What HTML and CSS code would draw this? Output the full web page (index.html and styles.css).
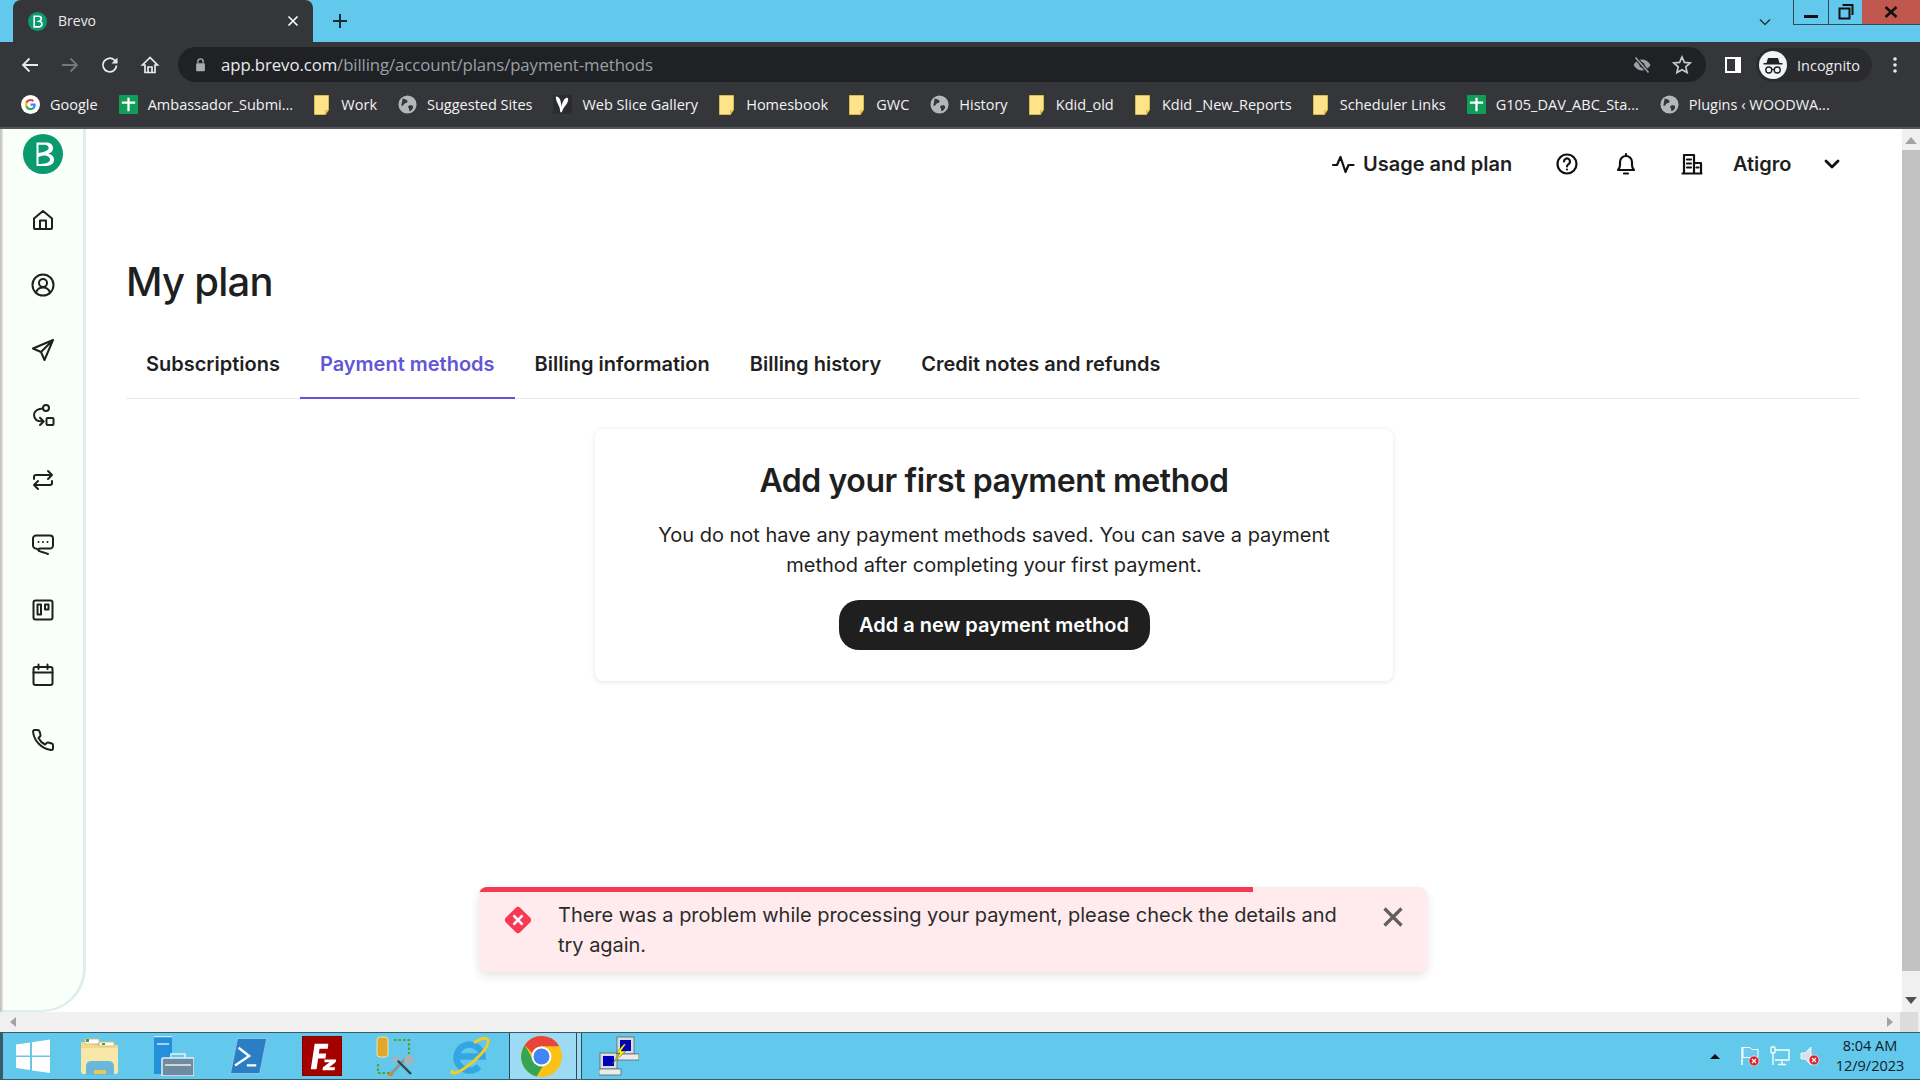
FILE: index.html
```html
<!DOCTYPE html>
<html lang="en">
<head>
<meta charset="utf-8">
<title>Brevo</title>
<link rel="stylesheet" href="styles.css">
</head>
<body>
<div class="titlebar">
  <div class="tab">
    <svg class="fav" viewBox="0 0 20 20"><circle cx="10" cy="10" r="10" fill="#0b996e"/><path d="M6.5 4.5h4.5c2 0 3 1 3 2.5 0 1.300-.8 2.200-2.200 2.700 1.800.3 2.900 1.400 2.900 3 0 2-1.700 3-4 3H6.500z" fill="none" stroke="#fff" stroke-width="1.700"/></svg>
    <span class="tab-title">Brevo</span>
    <svg class="tab-x" viewBox="0 0 12 12"><path d="M1.500 1.500l9 9M10.500 1.500l-9 9" stroke="#fff" stroke-width="1.600"/></svg>
  </div>
  <svg class="plus" viewBox="0 0 16 16"><path d="M8 1v14M1 8h14" stroke="#1b2a33" stroke-width="2"/></svg>
  <svg class="tab-list" viewBox="0 0 12 8"><path d="M1 1.500l5 5 5-5" fill="none" stroke="#24363f" stroke-width="1.500"/></svg>
  <div class="winbtns">
    <div class="winbtn min"><svg viewBox="0 0 16 16" width="16" height="16"><rect x="1" y="11" width="14" height="3" fill="#111"/></svg></div>
    <div class="winbtn max"><svg viewBox="0 0 16 16" width="16" height="16"><path d="M4.500 1h10v10M1.500 4.500h10v10h-10z" fill="none" stroke="#111" stroke-width="2"/></svg></div>
    <div class="winbtn close"><svg viewBox="0 0 14 12" width="14" height="12"><path d="M1.500 1l11 10M12.500 1l-11 10" stroke="#111" stroke-width="2.600"/></svg></div>
  </div>
</div>

<div class="toolbar">
  <div class="navs">
    <svg class="nav" viewBox="0 0 20 20"><path d="M18 10H3M9.500 3.500L3 10l6.500 6.500" fill="none" stroke="#e8eaed" stroke-width="1.800"/></svg>
    <svg class="nav" viewBox="0 0 20 20"><path d="M2 10h15M10.500 3.500L17 10l-6.500 6.500" fill="none" stroke="#74777b" stroke-width="1.800"/></svg>
    <svg class="nav" viewBox="0 0 20 20"><path d="M16.500 10.500a6.800 6.800 0 1 1-2-5.300L17 7.500" fill="none" stroke="#e8eaed" stroke-width="1.800"/><path d="M17.500 2.500v6h-6z" fill="#e8eaed"/></svg>
    <svg class="nav" viewBox="0 0 20 20"><path d="M10 2.500L2.500 10H5v7.500h10V10h2.500zM8 17.500V12h4v5.500" fill="none" stroke="#e8eaed" stroke-width="1.700"/></svg>
  </div>
  <div class="omnibox">
    <svg class="lock" viewBox="0 0 12 16"><rect x="1" y="6" width="10" height="9" rx="1" fill="#a8abaf"/><path d="M3 6V4a3 3 0 0 1 6 0v2" fill="none" stroke="#a8abaf" stroke-width="1.500"/></svg>
    <span class="url"><span class="url-host">app.brevo.com</span>/billing/account/plans/payment-methods</span>
    <svg class="eye" viewBox="0 0 20 20"><path d="M1.500 10S4.500 4.500 10 4.500 18.500 10 18.500 10 15.500 15.500 10 15.500 1.500 10 1.500 10z" fill="#9aa0a6"/><circle cx="10" cy="10" r="2.500" fill="#202124"/><path d="M3.500 2.500l13 15" stroke="#202124" stroke-width="3.500"/><path d="M3.500 2.500l13 15" stroke="#9aa0a6" stroke-width="1.600"/></svg>
    <svg class="star" viewBox="0 0 20 20"><path d="M10 2l2.400 5.400 5.800.6-4.400 3.900 1.300 5.700L10 14.700l-5.100 2.900 1.300-5.700L1.800 8l5.800-.6z" fill="none" stroke="#c5c7ca" stroke-width="1.700"/></svg>
  </div>
  <svg class="panel" viewBox="0 0 18 18"><rect x="1" y="1" width="16" height="16" fill="#fff"/><rect x="3" y="3" width="8" height="12" fill="#35363a"/></svg>
  <div class="incognito">
    <svg class="incog-av" viewBox="0 0 28 28"><circle cx="14" cy="14" r="14" fill="#f1f3f4"/><path d="M9 7h10l1.500 5h3v1.500h-19V12h3z" fill="#202124"/><circle cx="9.800" cy="19" r="3" fill="none" stroke="#202124" stroke-width="1.400"/><circle cx="18.200" cy="19" r="3" fill="none" stroke="#202124" stroke-width="1.400"/><path d="M12.500 18.500h3" stroke="#202124" stroke-width="1.200"/></svg>
    <span class="incog-label">Incognito</span>
  </div>
  <svg class="dots" viewBox="0 0 4 18"><circle cx="2" cy="3" r="1.800" fill="#e8eaed"/><circle cx="2" cy="9" r="1.800" fill="#e8eaed"/><circle cx="2" cy="15" r="1.800" fill="#e8eaed"/></svg>
</div>

<div class="bookmarks">
  <div class="bm">
    <svg class="bm-ic" viewBox="0 0 20 20"><circle cx="10" cy="10" r="10" fill="#fff"/><path d="M15.500 10.200c0-.5 0-.9-.1-1.300H10v2.400h3.100a2.700 2.700 0 0 1-1.200 1.800v1.500h1.900c1.100-1 1.700-2.500 1.700-4.400z" fill="#4285f4"/><path d="M10 16c1.600 0 3-.5 3.800-1.400l-1.900-1.500c-.5.400-1.200.6-1.900.6-1.500 0-2.800-1-3.200-2.400H4.800v1.500A6 6 0 0 0 10 16z" fill="#34a853"/><path d="M6.800 11.300a3.600 3.600 0 0 1 0-2.600V7.200h-2a6 6 0 0 0 0 5.600z" fill="#fbbc05"/><path d="M10 6.400c.8 0 1.600.3 2.200.9l1.600-1.700A6 6 0 0 0 4.800 7.200l2 1.500C7.200 7.400 8.500 6.400 10 6.400z" fill="#ea4335"/></svg>
    <span>Google</span>
  </div>
  <div class="bm">
    <svg class="bm-ic" viewBox="0 0 20 20"><rect width="20" height="20" rx="1" fill="#0f9d58"/><path d="M10 3v14M3 8h14" stroke="#fff" stroke-width="2.400"/></svg>
    <span>Ambassador_Submi...</span>
  </div>
  <div class="bm bm-folder">
    <svg class="bm-ic folder" viewBox="0 0 16 20"><path d="M.5.5h14v14l-3 5H.5z" fill="#fee388" stroke="#d9b84c"/><path d="M11.500 19.500v-4h3" fill="none" stroke="#d9b84c"/></svg>
    <span>Work</span>
  </div>
  <div class="bm">
    <svg class="bm-ic" viewBox="0 0 20 20"><circle cx="10" cy="10" r="9.500" fill="#b4b7ba"/><path d="M5 3.500c2 1.500 5 1 5 3.500 0 1.500-2.500 1-3.500 2.500S5 12 3.500 11M12 11c2-.5 4 0 4 1.500s-2 4-3.500 4.500c-1 .2-.5-3-1.500-3.500-1-.7 0-2.300 1-2.500z" fill="#35363a"/></svg>
    <span>Suggested Sites</span>
  </div>
  <div class="bm">
    <svg class="bm-ic" viewBox="0 0 20 20"><rect width="20" height="20" fill="#2b2c2f"/><path d="M3 1.500c2.500 0 4.500 2 5 5 .3 2 .8 4 1 6 .3-3 2-8 5-9.500 2-.8 2.500 1.500 1.500 4-1 3-3.500 5-5 8-.5 1.500-1 3-2 3.500-1.500-.3-1-3-1.500-5C6 10 2.500 6 3 1.500z" fill="#fff"/></svg>
    <span>Web Slice Gallery</span>
  </div>
  <div class="bm bm-folder">
    <svg class="bm-ic folder" viewBox="0 0 16 20"><path d="M.5.5h14v14l-3 5H.5z" fill="#fee388" stroke="#d9b84c"/><path d="M11.500 19.500v-4h3" fill="none" stroke="#d9b84c"/></svg>
    <span>Homesbook</span>
  </div>
  <div class="bm bm-folder">
    <svg class="bm-ic folder" viewBox="0 0 16 20"><path d="M.5.5h14v14l-3 5H.5z" fill="#fee388" stroke="#d9b84c"/><path d="M11.500 19.500v-4h3" fill="none" stroke="#d9b84c"/></svg>
    <span>GWC</span>
  </div>
  <div class="bm">
    <svg class="bm-ic" viewBox="0 0 20 20"><circle cx="10" cy="10" r="9.500" fill="#b4b7ba"/><path d="M5 3.500c2 1.500 5 1 5 3.500 0 1.500-2.500 1-3.500 2.500S5 12 3.500 11M12 11c2-.5 4 0 4 1.500s-2 4-3.500 4.500c-1 .2-.5-3-1.500-3.500-1-.7 0-2.300 1-2.500z" fill="#35363a"/></svg>
    <span>History</span>
  </div>
  <div class="bm bm-folder">
    <svg class="bm-ic folder" viewBox="0 0 16 20"><path d="M.5.5h14v14l-3 5H.5z" fill="#fee388" stroke="#d9b84c"/><path d="M11.500 19.500v-4h3" fill="none" stroke="#d9b84c"/></svg>
    <span>Kdid_old</span>
  </div>
  <div class="bm bm-folder">
    <svg class="bm-ic folder" viewBox="0 0 16 20"><path d="M.5.5h14v14l-3 5H.5z" fill="#fee388" stroke="#d9b84c"/><path d="M11.500 19.500v-4h3" fill="none" stroke="#d9b84c"/></svg>
    <span>Kdid _New_Reports</span>
  </div>
  <div class="bm bm-folder">
    <svg class="bm-ic folder" viewBox="0 0 16 20"><path d="M.5.5h14v14l-3 5H.5z" fill="#fee388" stroke="#d9b84c"/><path d="M11.500 19.500v-4h3" fill="none" stroke="#d9b84c"/></svg>
    <span>Scheduler Links</span>
  </div>
  <div class="bm">
    <svg class="bm-ic" viewBox="0 0 20 20"><rect width="20" height="20" rx="1" fill="#0f9d58"/><path d="M10 3v14M3 8h14" stroke="#fff" stroke-width="2.400"/></svg>
    <span>G105_DAV_ABC_Sta...</span>
  </div>
  <div class="bm">
    <svg class="bm-ic" viewBox="0 0 20 20"><circle cx="10" cy="10" r="9.500" fill="#b4b7ba"/><path d="M5 3.500c2 1.500 5 1 5 3.500 0 1.500-2.500 1-3.500 2.500S5 12 3.500 11M12 11c2-.5 4 0 4 1.500s-2 4-3.500 4.500c-1 .2-.5-3-1.500-3.500-1-.7 0-2.300 1-2.500z" fill="#35363a"/></svg>
    <span>Plugins ‹ WOODWA...</span>
  </div>
</div>

<div class="viewport">
  <div class="page-row">
    <div class="leftedge"></div>
    <aside class="sidebar">
      <svg class="logo" viewBox="0 0 40 40"><circle cx="20" cy="20" r="20" fill="#0b996e"/><path d="M13.500 8.500h10c4 0 6.500 2.300 6.500 5.700 0 2.800-1.800 4.700-5 5.600 3.800.6 6 2.800 6 6 0 4-3.300 6.200-8 6.200h-9.500z M15.500 19c3.200-.6 8.500-1 10.200-4.500 0-2.400-1.500-3.800-4-3.800h-6.200z M15.500 30c5-.2 11.500-.8 11.500-4.300 0-2.600-2.500-4.300-6-4.200-2 .1-4 .6-5.500 1.500z" fill="#fff" fill-rule="evenodd"/></svg>
      <svg class="side-ic" viewBox="0 0 24 24"><path d="M3 10.500L12 3l9 7.500V20a1 1 0 0 1-1 1H4a1 1 0 0 1-1-1zM9 21v-8.500h6V21"/></svg>
      <svg class="side-ic" viewBox="0 0 24 24"><circle cx="12" cy="12" r="10.500"/><circle cx="12" cy="10" r="4"/><path d="M5 19.500c1-3 4-5 7-5s6 2 7 5"/></svg>
      <svg class="side-ic" viewBox="0 0 24 24"><path d="M22 2L2 10.500l8 3.500 3.500 8zM22 2L10 14"/></svg>
      <svg class="side-ic" viewBox="0 0 24 24"><circle cx="15" cy="5" r="3"/><rect x="15.500" y="15" width="7" height="7" rx="1"/><path d="M12 5.500C7 5.500 3 8 3 12s3 6.500 9 6.500M9 14.800l3.700 3.700L9 22"/></svg>
      <svg class="side-ic" viewBox="0 0 24 24"><path d="M3 11V9a2 2 0 0 1 2-2h16M17 3l4 4-4 4M21 13v2a2 2 0 0 1-2 2H3M7 13l-4 4 4 4"/></svg>
      <svg class="side-ic" viewBox="0 0 24 24"><path d="M5 2.500h14a3 3 0 0 1 3 3v7a3 3 0 0 1-3 3H9c-1.500 0-2 1-1 2 1 1.500 4 1.500 9 3.500M5 15.500a3 3 0 0 1-3-3v-7a3 3 0 0 1 3-3M8 18c-1-1-2-2.500-3-2.500"/><path d="M7.500 9h.01M12 9h.01M16.500 9h.01"/></svg>
      <svg class="side-ic" viewBox="0 0 24 24"><rect x="2.500" y="2.500" width="19" height="19" rx="2"/><rect x="6.500" y="6.500" width="3.500" height="10"/><rect x="14" y="6.500" width="3.500" height="5"/></svg>
      <svg class="side-ic" viewBox="0 0 24 24"><rect x="2.500" y="4" width="19" height="18" rx="2"/><path d="M2.500 9.500h19M7.500 1.500V6M16.500 1.500V6"/></svg>
      <svg class="side-ic" viewBox="0 0 24 24"><path d="M6.500 2H3.500C2.500 2 2 3 2.100 4 3 13 11 21 20 22c1 .1 2-.5 2-1.500V17c0-.8-.5-1.300-1.200-1.500l-3.500-1c-.6-.2-1.200 0-1.600.4L14 16.500C11 15 9 13 7.500 10l1.600-1.700c.4-.4.600-1 .4-1.600l-1-3.500C8.300 2.500 7.400 2 6.500 2z"/></svg>
    </aside>
    <main class="main">
      <header class="topbar">
        <div class="usage">
          <svg class="top-ic activity" viewBox="0 0 24 24"><path d="M2 13h4l3.500-8 5 15 3-7h5"/></svg>
          <span>Usage and plan</span>
        </div>
        <svg class="top-ic help" viewBox="0 0 24 24"><circle cx="12" cy="12" r="9.500"/><path d="M9 9.500a3 3 0 1 1 4.500 2.600c-1 .6-1.500 1.200-1.500 2.400M12 17.500v.01"/></svg>
        <svg class="top-ic bell" viewBox="0 0 24 24"><path d="M4 18c1.500-1.500 2-3 2-5V10a6 6 0 0 1 12 0v3c0 2 .5 3.500 2 5zM10 21.500h4M12 2v2"/></svg>
        <svg class="top-ic org" viewBox="0 0 24 24"><path d="M4 21V3h10v18M14 11h7v10M2.500 21.500h19M7 7.500h4M7 11.500h4M7 15.500h4M16.500 15.500h2"/></svg>
        <span class="org-name">Atigro</span>
        <svg class="top-ic chev" viewBox="0 0 24 24"><path d="M6 9l6 6 6-6"/></svg>
      </header>
      <h1 class="page-title">My plan</h1>
      <nav class="tabs">
        <a class="tab-link">Subscriptions</a>
        <a class="tab-link active">Payment methods</a>
        <a class="tab-link">Billing information</a>
        <a class="tab-link">Billing history</a>
        <a class="tab-link">Credit notes and refunds</a>
      </nav>
      <section class="card">
        <h2 class="card-title">Add your first payment method</h2>
        <p class="card-text">You do not have any payment methods saved. You can save a payment method after completing your first payment.</p>
        <button class="primary">Add a new payment method</button>
      </section>
      <div class="toast">
        <div class="toast-bar"></div>
        <svg class="toast-ic" viewBox="0 0 30 30"><rect x="6" y="6" width="18" height="18" rx="3" transform="rotate(45 15 15)" fill="#f63a54"/><path d="M11 11l8 8M19 11l-8 8" stroke="#fff" stroke-width="2.200"/></svg>
        <p class="toast-text">There was a problem while processing your payment, please check the details and try again.</p>
        <svg class="toast-x" viewBox="0 0 20 20"><path d="M1.500 1.500l17 17M18.500 1.500l-17 17" stroke="#5f5f5f" stroke-width="3.200"/></svg>
      </div>
    </main>
    <div class="vscroll">
      <svg class="sb-arrow" viewBox="0 0 10 6"><path d="M5 0l5 6H0z" fill="#a3a3a3"/></svg>
      <div class="vthumb"></div>
      <svg class="sb-arrow" viewBox="0 0 10 6"><path d="M5 6L0 0h10z" fill="#505050"/></svg>
    </div>
  </div>
  <div class="hscroll">
    <svg class="hs-arrow" viewBox="0 0 6 10"><path d="M0 5l6-5v10z" fill="#a3a3a3"/></svg>
    <svg class="hs-arrow" viewBox="0 0 6 10"><path d="M6 5L0 0v10z" fill="#a3a3a3"/></svg>
    <div class="corner"></div>
  </div>
</div>

<footer class="taskbar">
  <svg class="tb-start" viewBox="0 0 34 34"><path d="M0 5.500l14-2v13H0zM16 3.200L34 .5V16.500H16zM0 18h14v13L0 29zM16 18h18v16l-18-2.500z" fill="#fff"/></svg>
  <svg class="tb-ic" viewBox="0 0 40 40"><path d="M1 6h12l3 3h22v26a3 3 0 0 1-3 3H4a3 3 0 0 1-3-3z" fill="#f3d987"/><path d="M5 3h14v5H5zM19 6h15v4H19z" fill="#fff" stroke="#d8c078"/><path d="M6 3h3v3H6zM22 7h3v2h-3z" fill="#3fa34d"/><path d="M1 12h37v23a3 3 0 0 1-3 3H4a3 3 0 0 1-3-3z" fill="#f7e7a9"/><path d="M6 39V30a5 5 0 0 1 5-5h18a5 5 0 0 1 5 5v9z" fill="#6bb7dc"/><path d="M14 34h12v4H14z" fill="#e6c95b"/></svg>
  <svg class="tb-ic" viewBox="0 0 40 40"><rect x="0" y="0" width="18" height="38" fill="#2490dc"/><path d="M0 .5h18M3 8h12" stroke="#cfe8f7" stroke-width="1.400"/><rect x="8" y="22" width="32" height="18" rx="1" fill="#6f8ba0" stroke="#e8f0f5" stroke-width="1.500"/><path d="M17 22v-4h14v4" fill="none" stroke="#e8f0f5" stroke-width="1.500"/><path d="M11 29h26" stroke="#e8f0f5" stroke-width="1.500"/></svg>
  <svg class="tb-ic" viewBox="0 0 34 34"><path d="M8 2h25l-6 30H2z" fill="#2a7fc4" stroke="#86c3e9"/><path d="M9 10l9 7-12 8M16 25h8" fill="none" stroke="#fff" stroke-width="2"/></svg>
  <svg class="tb-ic" viewBox="0 0 41 41"><rect width="41" height="41" fill="#a50000"/><path d="M0 0h41v41H0z" fill="none" stroke="#600" stroke-width="2" stroke-dasharray="2 2"/><path d="M9 34L13 8h14l-.6 5H18l-.8 5h7.500l-.6 5h-7.500l-1.700 11z" fill="#fff"/><path d="M23 24h12l-.6 3-6.500 5h6l-.5 3H21l.5-3 6.800-5H23z" fill="#fff"/></svg>
  <svg class="tb-ic" viewBox="0 0 40 40"><rect x="1" y="1" width="11" height="20" rx="3" fill="#e0a92e" stroke="#f3e3ab"/><path d="M18 4h15v14M2 28v9h12" fill="none" stroke="#55a02f" stroke-width="2.200" stroke-dasharray="2.500 2"/><path d="M16 37L30 22" stroke="#8a949b" stroke-width="3"/><path d="M16 37l-3 3" stroke="#c98a2c" stroke-width="4"/><path d="M19 22l16 16" stroke="#38434a" stroke-width="2.400"/><circle cx="33" cy="24" r="5" fill="#a7b3bb"/><path d="M15 24l6-4 3 3-5 4z" fill="#a7b3bb"/></svg>
  <svg class="tb-ic" viewBox="0 0 40 40"><path d="M7.500 20.500h25a13 13 0 1 0-3.500 10" fill="none" stroke="#35a6e4" stroke-width="6.500"/><path d="M3 34C-1 39 6 38 15 32 27 24 40 10 38 4c-1-3-8-2-14 3" fill="none" stroke="#f2cc28" stroke-width="2.800"/></svg>
  <div class="tb-active">
    <svg class="tb-chrome" viewBox="0 0 41 41"><circle cx="20.500" cy="20.500" r="20.500" fill="#fbc116"/><path d="M20.500 0a20.500 20.500 0 0 1 17.800 10.300H20.500a10 10 0 0 0-9.400 6.600L3.700 9A20.500 20.500 0 0 1 20.500 0z" fill="#e9443a"/><path d="M3.700 9l8 14a10 10 0 0 0 10 7l-6 10.500A20.500 20.500 0 0 1 3.700 9z" fill="#36a551"/><circle cx="20.500" cy="20.500" r="10" fill="#fff"/><circle cx="20.500" cy="20.500" r="8" fill="#4285f4"/></svg>
  </div>
  <div class="tb-sep"></div>
  <svg class="tb-ic tb-net" viewBox="0 0 40 40"><rect x="18" y="1" width="17" height="17" fill="#d8dde2" stroke="#555" stroke-width=".7"/><rect x="21" y="4" width="11" height="11" fill="#0000b8"/><rect x="16" y="18" width="24" height="6" fill="#e8ecef" stroke="#555" stroke-width=".7"/><rect x="1" y="17" width="17" height="16" fill="#d8dde2" stroke="#555" stroke-width=".7"/><rect x="4" y="20" width="11" height="10" fill="#0000b8"/><rect x="0" y="33" width="22" height="6" fill="#e8ecef" stroke="#555" stroke-width=".7"/><path d="M25 8l-8 9 4 0-8 11 14-13h-5l5-7z" fill="#f7ee1a" stroke="#333" stroke-width=".5"/></svg>
  <div class="tray">
    <svg class="tray-up" viewBox="0 0 10 5"><path d="M5 0l5 5H0z" fill="#111"/></svg>
    <svg class="tray-ic" viewBox="0 0 20 20"><path d="M2 1v18" stroke="#fff" stroke-width="1.400"/><path d="M3 1.500h7l2 2 6 0v8H3z" fill="#6cc9ea" stroke="#fff"/><circle cx="14" cy="15" r="5" fill="#d8232a" stroke="#fff" stroke-width=".6"/><path d="M12 13l4 4M16 13l-4 4" stroke="#fff" stroke-width="1.200"/></svg>
    <svg class="tray-ic" viewBox="0 0 20 20"><rect x="1" y="1" width="4" height="6" rx="1" fill="none" stroke="#fff" stroke-width="1.300"/><path d="M3 7v12M5 4h14v10H5M12 14v4M8 18.500h8" fill="none" stroke="#fff" stroke-width="1.300"/></svg>
    <svg class="tray-ic" viewBox="0 0 20 20"><path d="M1 7h4l6-6v18l-6-6H1z" fill="#d7e2e8" stroke="#fff" stroke-width=".8"/><circle cx="14" cy="14" r="5" fill="#d8232a" stroke="#fff" stroke-width=".6"/><path d="M12 12l4 4M16 12l-4 4" stroke="#fff" stroke-width="1.200"/></svg>
    <div class="clock"><span>8:04 AM</span><span>12/9/2023</span></div>
  </div>
</footer>
</body>
</html>
```
FILE: styles.css
```css
* { box-sizing: border-box; }
html, body { margin: 0; padding: 0; }
body {
  width: 1920px;
  height: 1080px;
  overflow: hidden;
  display: flex;
  flex-direction: column;
  font-family: Inter, "Liberation Sans", sans-serif;
  background: #fff;
}

/* Browser chrome */
.titlebar {
  height: 42px;
  flex: none;
  background: #62c8ec;
  display: flex;
  align-items: flex-start;
  padding-left: 13px;
  position: relative;
}
.tab {
  width: 300px;
  height: 42px;
  background: #35363a;
  border-radius: 8px 8px 0 0;
  display: flex;
  align-items: center;
  padding: 0 14px 0 15px;
  color: #e8eaed;
}
.fav { width: 19px; height: 19px; flex: none; }
.tab-title {
  margin-left: 11px;
  margin-top: -2px;
  font: 14px "Open Sans", sans-serif;
  flex: 1;
}
.tab-x { width: 12px; height: 12px; }
.plus { width: 16px; height: 16px; margin: 13px 0 0 19px; }
.tab-list { width: 12px; height: 8px; margin: 18px 0 0 1411px; }
.winbtns {
  position: absolute;
  top: 0;
  right: 0;
  display: flex;
  height: 25px;
  border-left: 1px solid #2c4a57;
  border-bottom: 1px solid #2c4a57;
}
.winbtn { display: flex; align-items: center; justify-content: center; height: 24px; }
.min { width: 35px; border-right: 1px solid #2c4a57; }
.max { width: 33px; }
.close { width: 58px; background: #c0584f; }

.toolbar {
  height: 40px;
  flex: none;
  background: #35363a;
  display: flex;
  align-items: flex-end;
  color: #e8eaed;
}
.navs {
  height: 35px;
  width: 178px;
  flex: none;
  display: flex;
  align-items: center;
  padding-left: 20px;
  gap: 20px;
}
.nav { width: 20px; height: 20px; flex: none; }
.omnibox {
  width: 1528px;
  height: 35px;
  flex: none;
  background: #202124;
  border-radius: 18px;
  display: flex;
  align-items: center;
  padding: 0 14px 0 17px;
}
.lock { width: 11px; height: 14px; flex: none; }
.url {
  margin-left: 15px;
  flex: 1;
  font: 16.800px "Open Sans", sans-serif;
  color: #9aa0a6;
  letter-spacing: -.1px;
}
.url-host { color: #e8eaed; }
.eye { width: 20px; height: 20px; }
.star { width: 20px; height: 20px; margin-left: 20px; }
.panel { width: 18px; height: 18px; margin: 0 0 8px 18px; flex: none; }
.incognito {
  width: 116px;
  height: 34px;
  margin-left: 14px;
  flex: none;
  background: #2a2b2e;
  border-radius: 17px;
  display: flex;
  align-items: center;
  padding-left: 3px;
}
.incog-av { width: 28px; height: 28px; flex: none; }
.incog-label { margin-left: 10px; font: 14.500px "Open Sans", sans-serif; }
.dots { width: 4px; height: 18px; margin: 0 0 8px 21px; flex: none; }

.bookmarks {
  height: 47px;
  flex: none;
  background: #35363a;
  border-bottom: 2px solid #54565a;
  display: flex;
  align-items: center;
  padding: 0 0 0 21px;
  gap: 21px;
  color: #f1f3f4;
  font: 14.500px "Open Sans", sans-serif;
}
.bm { display: flex; align-items: center; gap: 10px; white-space: nowrap; }
.bm-folder { gap: 11.200px; }
.bm-ic { width: 19px; height: 19px; flex: none; }
.bm-ic.folder { width: 16px; height: 20px; }

/* Page area */
.viewport { flex: 1; min-height: 0; display: flex; flex-direction: column; }
.page-row { flex: 1; min-height: 0; display: flex; }
.leftedge { width: 3px; flex: none; background: linear-gradient(90deg, #bdbdbd, #e6e6e6); }
.sidebar {
  width: 83px;
  flex: none;
  background: #f9fff9;
  border-right: 3px solid #dcefe8;
  border-bottom: 2px solid #dcefe8;
  border-radius: 0 0 44px 0;
  display: flex;
  flex-direction: column;
  align-items: center;
  padding-top: 5px;
  gap: 41px;
}
.logo { width: 40px; height: 40px; flex: none; margin: 0 0 -7px -1px; }
.side-ic {
  width: 24px;
  height: 24px;
  flex: none;
  fill: none;
  stroke: #1f1f1f;
  stroke-width: 2;
  stroke-linecap: round;
  stroke-linejoin: round;
  margin-left: -1px;
}

.main {
  flex: 1;
  min-width: 0;
  position: relative;
  padding: 0 42px 0 40px;
}
.topbar {
  height: 70px;
  display: flex;
  align-items: center;
  padding-left: 1205px;
  font-size: 20px;
  font-weight: 600;
  color: #1f1f1f;
}
.usage { display: flex; align-items: center; gap: 8px; width: 224px; }
.top-ic {
  width: 24px;
  height: 24px;
  flex: none;
  fill: none;
  stroke: #111;
  stroke-width: 2.200;
  stroke-linecap: round;
  stroke-linejoin: round;
}
.bell { margin-left: 35px; }
.org { margin-left: 42px; }
.org-name { margin-left: 29px; width: 87px; }
.chev { stroke-width: 2.800; }
.page-title {
  margin: 59px 0 0;
  font-size: 40px;
  line-height: 48px;
  font-weight: 500;
  letter-spacing: -.75px;
  color: #1f1f1f;
}
.tabs {
  display: flex;
  border-bottom: 1px solid #eaeaea;
  margin-top: 47px;
  height: 46px;
}
.tab-link {
  padding: 0 20px;
  height: 46px;
  font-size: 20px;
  line-height: 22px;
  font-weight: 600;
  color: #1f1f1f;
  white-space: nowrap;
}
.tab-link.active { color: #6356d6; border-bottom: 2px solid #6356d6; }
.card {
  width: 798px;
  height: 252px;
  margin: 30px auto 0;
  padding: 32px 50px 0;
  position: relative;
  left: 1px;
  border-radius: 8px;
  background: #fff;
  box-shadow: 0 1px 5px rgba(31, 31, 31, .12);
  text-align: center;
  color: #1f1f1f;
}
.card-title { margin: 0; font-size: 32px; line-height: 40px; font-weight: 600; letter-spacing: -.42px; }
.card-text { margin: 19px 0 0; font-size: 20px; line-height: 30px; font-weight: 400; }
.primary {
  display: block;
  margin: 20px auto 0;
  width: 311px;
  height: 50px;
  border: 0;
  border-radius: 20px;
  background: #1f1f1f;
  color: #fff;
  font: 600 20px Inter, sans-serif;
}
.toast {
  position: absolute;
  left: 393px;
  top: 758px;
  width: 948px;
  height: 85px;
  background: #ffebee;
  border-radius: 8px;
  box-shadow: 0 4px 10px rgba(31, 31, 31, .12);
  display: flex;
  overflow: hidden;
  color: #2b2b2b;
}
.toast-bar {
  position: absolute;
  left: 0;
  top: 0;
  width: 774px;
  height: 5px;
  background: #f63a54;
}
.toast-ic { width: 34px; height: 34px; flex: none; margin: 16px 0 0 22px; }
.toast-text { margin: 13px 0 0 23px; width: 800px; font-size: 20px; line-height: 30px; letter-spacing: -.03px; }
.toast-x { width: 20px; height: 20px; flex: none; margin: 20px 0 0 25px; }

.vscroll {
  width: 18px;
  flex: none;
  background: #f0f0f0;
  display: flex;
  flex-direction: column;
  align-items: center;
  padding-top: 8px;
}
.sb-arrow { width: 12px; height: 7px; flex: none; }
.vthumb { width: 18px; height: 821px; margin: 6px 0 26px; background: #c2c2c2; flex: none; }
.hscroll {
  height: 20px;
  flex: none;
  background: #f0f0f0;
  display: flex;
  align-items: center;
  padding-left: 10px;
}
.hs-arrow { width: 6px; height: 10px; flex: none; }
.hs-arrow + .hs-arrow { margin-left: 1871px; }
.corner { width: 18px; height: 20px; margin-left: 7px; background: #dcdcdc; flex: none; }

/* Windows taskbar */
.taskbar {
  height: 48px;
  flex: none;
  background: #62c8ec;
  border-top: 1px solid #3b5a68;
  border-bottom: 1px solid #3b5a68;
  border-left: 3px solid #3b5a68;
  display: flex;
  align-items: center;
  padding-left: 13px;
}
.tb-start { width: 34px; height: 34px; flex: none; margin-right: -4px; }
.tb-ic { width: 40px; height: 40px; flex: none; margin-left: 34px; }
.tb-active {
  margin-left: 19px;
  width: 67px;
  height: 46px;
  flex: none;
  background: #9cdbf3;
  border-left: 1px solid #2c4a57;
  display: flex;
  align-items: center;
  padding-left: 11px;
}
.tb-chrome { width: 41px; height: 41px; }
.tb-sep {
  width: 6px;
  height: 46px;
  flex: none;
  background: #9cdbf3;
  border-left: 1px solid #2c4a57;
  border-right: 1px solid #2c4a57;
}
.tb-net { margin-left: 17px; }
.tray { margin-left: auto; display: flex; align-items: center; color: #10202a; }
.tray-up { width: 10px; height: 5px; margin-right: 20px; }
.tray-ic { width: 20px; height: 20px; margin-right: 10px; }
.clock {
  display: flex;
  flex-direction: column;
  align-items: center;
  width: 72px;
  margin: 0 14px 0 4px;
  font: 14.500px/20px "Open Sans", sans-serif;
}
```
